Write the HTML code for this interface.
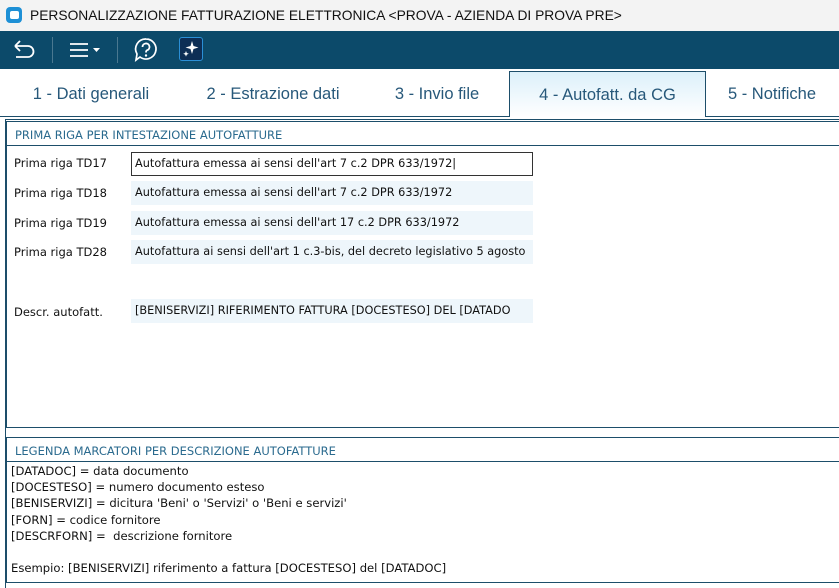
<!DOCTYPE html>
<html><head><meta charset="utf-8"><style>
*{margin:0;padding:0;box-sizing:border-box}
body{width:839px;height:588px;overflow:hidden;background:#fff;font-family:"DejaVu Sans","Liberation Sans",sans-serif;position:relative}
.abs{position:absolute}
.title{left:0;top:0;width:839px;height:31px;background:#f3f3f3;font-family:"Liberation Sans",sans-serif;font-size:13.8px;color:#111;line-height:31px;padding-left:30px;white-space:nowrap}
.tb{left:0;top:31px;width:839px;height:38px;background:#0c4a6a}
.sep{position:absolute;top:6px;width:1px;height:26px;background:#4a7890}
.tab{top:71px;height:46px;font-family:"Liberation Sans",sans-serif;font-size:16.5px;color:#27587a;line-height:46px;text-align:center}
.lbl{font-size:11.5px;color:#111;left:14px;white-space:nowrap}
.fld{left:131px;width:402px;height:24px;background:#eef6fb;font-size:11.3px;color:#111;line-height:24px;padding-left:4px;white-space:nowrap;overflow:hidden}
.hdr{font-size:11.5px;color:#2a6a8e;white-space:nowrap}
.leg{left:11px;font-size:11.6px;color:#111;line-height:16.2px;white-space:pre}
</style></head><body>
<div class="abs title">PERSONALIZZAZIONE FATTURAZIONE ELETTRONICA &lt;PROVA - AZIENDA DI PROVA PRE&gt;</div>
<div class="abs" style="left:6px;top:7px;width:16px;height:16px;border-radius:4px;background:#1e90d6"><div style="position:absolute;left:4px;top:4px;width:9px;height:8px;background:#fff;border-radius:2px"></div></div>
<div class="abs tb">
<svg class="abs" style="left:12px;top:8px" width="26" height="22" viewBox="0 0 26 22"><path d="M3 7h13a5.5 5.5 0 0 1 0 11H4M3 7l5-5M3 7l5 5" fill="none" stroke="#fff" stroke-width="1.8"/></svg>
<div class="sep" style="left:52px"></div>
<svg class="abs" style="left:68px;top:10px" width="36" height="18"><path d="M2 3h18M2 9h18M2 15h18" stroke="#fff" stroke-width="1.8"/><path d="M25 7h7l-3.5 4z" fill="#fff"/></svg>
<div class="sep" style="left:117px"></div>
<svg class="abs" style="left:133px;top:6px" width="26" height="26" viewBox="0 0 26 26"><path d="M13 2a10 10 0 1 1-6 18l-4 3 1-6A10 10 0 0 1 13 2z" fill="none" stroke="#fff" stroke-width="1.7"/><path d="M9.5 10a3.5 3.5 0 1 1 4.5 3.3c-1 .4-1 1-1 2.2" fill="none" stroke="#fff" stroke-width="1.8"/><circle cx="13" cy="18.5" r="1.2" fill="#fff"/></svg>
<div class="abs" style="left:179px;top:6px;width:24px;height:24px;border:1.5px solid #2b8fd6;border-radius:3px;background:#0d2e55"><svg width="21" height="21" viewBox="0 0 21 21"><path d="M12 3l1.5 5 5 1.5-5 1.5-1.5 5-1.5-5-5-1.5 5-1.5z" fill="#fff"/><path d="M6 13l.8 2 2 .8-2 .8-.8 2-.8-2-2-.8 2-.8z" fill="#fff"/></svg></div>
</div>
<div class="abs tab" style="left:0;width:182px">1 - Dati generali</div>
<div class="abs tab" style="left:182px;width:182px">2 - Estrazione dati</div>
<div class="abs tab" style="left:364px;width:146px">3 - Invio file</div>
<div class="abs tab" style="left:509px;width:197px;border:1px solid #1d4e6a;border-bottom:none;background:linear-gradient(#dcf0fa,#fff)">4 - Autofatt. da CG</div>
<div class="abs tab" style="left:705px;width:134px">5 - Notifiche</div>
<div class="abs" style="left:0;top:116px;width:510px;height:1px;background:#1d4e6a"></div>
<div class="abs" style="left:705px;top:116px;width:134px;height:1px;background:#1d4e6a"></div>
<div class="abs" style="left:0;top:118px;width:839px;height:2px;background:#fff"></div>
<div class="abs" style="left:5px;top:119px;width:1px;height:469px;background:#1d4e6a"></div>
<div class="abs" style="left:5px;top:119px;width:834px;height:1px;background:#1d4e6a"></div>
<div class="abs" style="left:6px;top:121px;width:840px;height:307px;border:1px solid #1d4e6a"></div>
<div class="abs" style="left:6px;top:145px;width:833px;height:1px;background:#1d4e6a"></div>
<div class="abs hdr" style="left:15px;top:128px">PRIMA RIGA PER INTESTAZIONE AUTOFATTURE</div>
<div class="abs lbl" style="top:156px">Prima riga TD17</div>
<div class="abs fld" style="top:152px;background:#fff;border:1px solid #333;line-height:22px;padding-left:3px">Autofattura emessa ai sensi dell'art 7 c.2 DPR 633/1972|</div>
<div class="abs lbl" style="top:186px">Prima riga TD18</div>
<div class="abs fld" style="top:181px">Autofattura emessa ai sensi dell'art 7 c.2 DPR 633/1972</div>
<div class="abs lbl" style="top:216px">Prima riga TD19</div>
<div class="abs fld" style="top:211px">Autofattura emessa ai sensi dell'art 17 c.2 DPR 633/1972</div>
<div class="abs lbl" style="top:245px">Prima riga TD28</div>
<div class="abs fld" style="top:240px">Autofattura ai sensi dell'art 1 c.3-bis, del decreto legislativo 5 agosto</div>
<div class="abs lbl" style="top:305px">Descr. autofatt.</div>
<div class="abs fld" style="top:299px">[BENISERVIZI] RIFERIMENTO FATTURA [DOCESTESO] DEL [DATADO</div>
<div class="abs" style="left:6px;top:437px;width:840px;height:146px;border:1px solid #1d4e6a"></div>
<div class="abs" style="left:6px;top:461px;width:833px;height:1px;background:#1d4e6a"></div>
<div class="abs hdr" style="left:15px;top:444px">LEGENDA MARCATORI PER DESCRIZIONE AUTOFATTURE</div>
<div class="abs leg" style="top:463px">[DATADOC] = data documento
[DOCESTESO] = numero documento esteso
[BENISERVIZI] = dicitura 'Beni' o 'Servizi' o 'Beni e servizi'
[FORN] = codice fornitore
[DESCRFORN] =  descrizione fornitore

Esempio: [BENISERVIZI] riferimento a fattura [DOCESTESO] del [DATADOC]</div>
</body></html>
